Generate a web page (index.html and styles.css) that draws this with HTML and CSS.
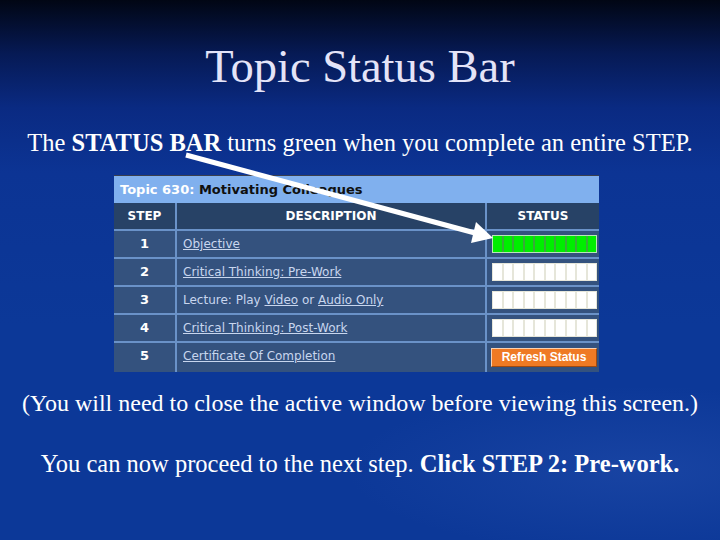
FILE: index.html
```html
<!DOCTYPE html>
<html>
<head>
<meta charset="utf-8">
<link rel="stylesheet" href="styles.css">
</head>
<body>
<div class="slide">
  <h1 class="title">Topic Status Bar</h1>
  <p class="lead">The <b>STATUS BAR</b> turns green when you complete an entire STEP.</p>
  <div class="topic">
    <div class="topic-head"><span class="num">Topic 630:</span> Motivating Colleagues</div>
    <div class="grid">
      <div class="th">STEP</div>
      <div class="th">DESCRIPTION</div>
      <div class="th">STATUS</div>

      <div class="td step">1</div>
      <div class="td desc"><a>Objective</a></div>
      <div class="td stat"><div class="bar done"><i></i><i></i><i></i><i></i><i></i><i></i><i></i><i></i><i></i><i></i></div></div>

      <div class="td step">2</div>
      <div class="td desc"><a>Critical Thinking: Pre-Work</a></div>
      <div class="td stat"><div class="bar"><i></i><i></i><i></i><i></i><i></i><i></i><i></i><i></i><i></i><i></i></div></div>

      <div class="td step">3</div>
      <div class="td desc">Lecture: Play <a>Video</a> or <a>Audio Only</a></div>
      <div class="td stat"><div class="bar"><i></i><i></i><i></i><i></i><i></i><i></i><i></i><i></i><i></i><i></i></div></div>

      <div class="td step">4</div>
      <div class="td desc"><a>Critical Thinking: Post-Work</a></div>
      <div class="td stat"><div class="bar"><i></i><i></i><i></i><i></i><i></i><i></i><i></i><i></i><i></i><i></i></div></div>

      <div class="td step">5</div>
      <div class="td desc"><a>Certificate Of Completion</a></div>
      <div class="td stat"><span class="btn">Refresh Status</span></div>
    </div>
  </div>
  <p class="note">(You will need to close the active window before viewing this screen.)</p>
  <p class="next">You can now proceed to the next step. <b>Click STEP 2: Pre-work.</b></p>
  <svg class="arrow" width="720" height="540" viewBox="0 0 720 540">
    <line x1="186" y1="155" x2="475" y2="233" stroke="#ffffff" stroke-width="5"/>
    <polygon points="493,238 476,222 471,243" fill="#ffffff"/>
  </svg>
</div>
</body>
</html>
```
FILE: styles.css
```css
html, body {
  margin: 0;
  padding: 0;
}
body {
  width: 720px;
  height: 540px;
  overflow: hidden;
  background:
    radial-gradient(ellipse 420px 120px at 640px 470px, rgba(80,120,210,0.18), rgba(80,120,210,0) 70%),
    linear-gradient(180deg, #010614 0%, #061a55 10%, #0a2a82 20%, #0c3494 32%, #0c3898 60%, #0c3898 100%);
  font-family: "Liberation Serif", "Times New Roman", serif;
  color: #ffffff;
}
.slide {
  position: relative;
  width: 720px;
  height: 540px;
  padding-top: 42px;
  box-sizing: border-box;
}
.title {
  margin: 0;
  font-size: 46.5px;
  line-height: 50px;
  font-weight: normal;
  text-align: center;
  color: #e4e4f8;
}
.lead {
  margin: 36px 0 0;
  font-size: 24.5px;
  line-height: 30px;
  text-align: center;
  white-space: nowrap;
}
.topic {
  width: 485px;
  margin: 17px 0 0 114px;
  background: #34527e;
  font-family: "DejaVu Sans", Verdana, sans-serif;
}
.topic-head {
  height: 27px;
  border-top: 1px solid #3a3f4e;
  background: #80b0ee;
  color: #101010;
  font-weight: bold;
  font-size: 13px;
  line-height: 28px;
  padding-left: 6px;
  white-space: nowrap;
}
.topic-head .num {
  color: #ffffff;
}
.grid {
  display: grid;
  grid-template-columns: 61px 308px 112px;
  grid-template-rows: 26px repeat(4, 26px) 27px;
  gap: 2px;
  background: #6a92c8;
  padding-bottom: 2px;
}
.th {
  background: #274266;
  color: #ffffff;
  font-weight: bold;
  font-size: 12px;
  line-height: 26px;
  text-align: center;
}
.td {
  background: #34527e;
  color: #c8d6ee;
  font-size: 12px;
  line-height: 26px;
  white-space: nowrap;
}
.grid > .td:nth-last-child(-n+3) {
  margin-bottom: -2px;
}
.step {
  color: #ffffff;
  font-weight: bold;
  font-size: 13px;
  text-align: center;
}
.desc {
  padding-left: 6px;
}
.desc a {
  text-decoration: underline;
  color: #c8d6ee;
}
.stat {
  display: flex;
  align-items: center;
  padding-left: 5px;
}
.bar {
  display: flex;
  gap: 2px;
  width: 105px;
  height: 18px;
  box-sizing: border-box;
  padding: 1px;
  background: #e6e6da;
}
.bar i {
  flex: 1;
  background: #ffffff;
}
.bar.done {
  background: #3aa83a;
  border: 1px solid #b8e8b8;
  padding: 0;
}
.bar.done i {
  background: #00ee00;
}
.btn {
  display: block;
  width: 106px;
  height: 19px;
  box-sizing: border-box;
  margin-left: -1px;
  border: 1px solid;
  border-color: #f8d0b0 #a04a10 #a04a10 #f8d0b0;
  background: #ef7a24;
  color: #ffffff;
  font-family: "Liberation Sans", Arial, sans-serif;
  font-weight: bold;
  font-size: 12px;
  line-height: 17px;
  text-align: center;
}
.note {
  margin: 16px 0 0;
  font-size: 24px;
  line-height: 30px;
  text-align: center;
  white-space: nowrap;
}
.next {
  margin: 31px 0 0;
  font-size: 24.5px;
  line-height: 30px;
  text-align: center;
  white-space: nowrap;
}
.arrow {
  position: absolute;
  left: 0;
  top: 0;
  pointer-events: none;
}
```
